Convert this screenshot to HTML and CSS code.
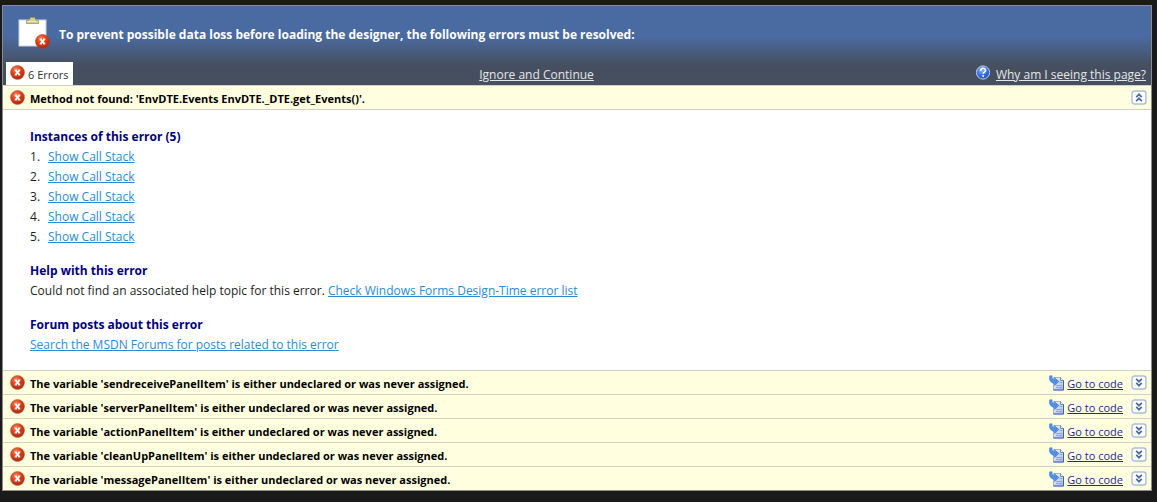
FILE: index.html
```
<!DOCTYPE html>
<html lang="en">
<head>
	<meta charset="utf-8">
	<title>Designer Errors</title>
	<link rel="stylesheet" href="styles.css">
</head>
<body>
	<!-- Shared icons -->
	<svg class="defs" width="0" height="0">
		<defs>
			<radialGradient id="red" cx="40%" cy="30%" r="70%">
				<stop offset="0" stop-color="#f58a62"/>
				<stop offset="0.5" stop-color="#dc4019"/>
				<stop offset="1" stop-color="#a82a10"/>
			</radialGradient>
			<radialGradient id="blue" cx="40%" cy="30%" r="70%">
				<stop offset="0" stop-color="#8ab6f8"/>
				<stop offset="0.6" stop-color="#3470dc"/>
				<stop offset="1" stop-color="#2355b4"/>
			</radialGradient>
			<linearGradient id="paper" x1="0" y1="0" x2="1" y2="1">
				<stop offset="0" stop-color="#ffffff"/>
				<stop offset="1" stop-color="#9db5e0"/>
			</linearGradient>
		</defs>
		<symbol id="error" viewBox="0 0 16 16">
			<circle cx="7.5" cy="7.5" r="7" fill="url(#red)" stroke="#b9644c" stroke-width="0.6"/>
			<path d="M5.5 5.2l4 4.6M9.5 5.2l-4 4.6" stroke="#fff" stroke-width="1.9"/>
			<path d="M4.5 5h2.2M8.3 5h2.2M4.5 10h2.2M8.3 10h2.2" stroke="#fff" stroke-width="0.8"/>
		</symbol>
		<symbol id="help" viewBox="0 0 16 16">
			<circle cx="7" cy="7.5" r="6.6" fill="url(#blue)" stroke="#b9cff5" stroke-width="1"/>
			<path d="M4.6 5.9c0-3.5 5-3.3 5-.4 0 1.7-2.4 1.5-2.4 3.3" fill="none" stroke="#fff" stroke-width="1.6"/>
			<circle cx="7.2" cy="11.1" r="1" fill="#fff"/>
		</symbol>
		<symbol id="code" viewBox="0 0 16 16">
			<path d="M4.5 2.5h7l3 3v9.5h-10z" fill="url(#paper)" stroke="#93a7cb" stroke-width="0.8"/>
			<path d="M4.5 15h10V5.5" fill="none" stroke="#46618f"/>
			<path d="M11.5 2.5v3h3" fill="#e9f0fc" stroke="#5b75a5" stroke-width="0.8"/>
			<path d="M10.5 7.5h2.5M7 10.5h6M7 12.5h6" stroke="#7f99c8" stroke-width="0.8"/>
			<path d="M.8.8C-.6 5 2 8.3 5.5 8.3v2.4l4.5-4.2-4.5-4v2.3C3.6 4.8 2.7 3.4 3.2.8z" fill="#4f90ea" stroke="#3a75cc" stroke-width="0.5"/>
		</symbol>
		<symbol id="expand" viewBox="0 0 16 16">
			<rect x="1" y="1" width="14" height="13" rx="2.5" fill="#fff" stroke="#abc0d5" stroke-width="1.4"/>
			<path d="M5.2 3.9L8 6.7l2.8-2.8M5.2 7.9L8 10.7l2.8-2.8" fill="none" stroke="#4c67a2" stroke-width="1.7"/>
		</symbol>
		<symbol id="collapse" viewBox="0 0 16 16">
			<rect x="1" y="1" width="14" height="13" rx="2.5" fill="#fff" stroke="#abc0d5" stroke-width="1.4"/>
			<path d="M5.2 7.1L8 4.3l2.8 2.8M5.2 11.1L8 8.3l2.8 2.8" fill="none" stroke="#4c67a2" stroke-width="1.7"/>
		</symbol>
	</svg>

	<main class="page">
		<header class="header">
			<div class="title">
				<svg class="clipboard" viewBox="0 0 32 34">
					<rect x="1" y="4" width="27" height="26" fill="#fff" stroke="#c8d2e3"/>
					<path d="M8.5 7.5v-3h2.5l1.5-3h4l1.5 3h2.5v3z" fill="#d5cd8d" stroke="#9d9659" stroke-width="0.8"/>
					<path d="M9.5 5.3h10" stroke="#f3edbd"/>
					<circle cx="24.5" cy="25.5" r="7" fill="url(#red)" stroke="#b04327" stroke-width="0.6"/>
					<path d="M22.5 23.2l4 4.6M26.5 23.2l-4 4.6" stroke="#fff" stroke-width="1.9"/>
					<path d="M21.5 23h2.2M25.3 23h2.2M21.5 28h2.2M25.3 28h2.2" stroke="#fff" stroke-width="0.8"/>
				</svg>
				<h1>To prevent possible data loss before loading the designer, the following errors must be resolved:</h1>
			</div>
			<nav class="tabs">
				<div class="tab-cell">
					<div class="tab"><svg class="icon"><use href="#error"/></svg><span>6 Errors</span></div>
				</div>
				<a href="#">Ignore and Continue</a>
				<div class="why"><svg class="icon"><use href="#help"/></svg><a href="#">Why am I seeing this page?</a></div>
			</nav>
		</header>

		<section class="error">
			<div class="bar">
				<svg class="icon"><use href="#error"/></svg>
				<h2>Method not found: 'EnvDTE.Events EnvDTE._DTE.get_Events()'.</h2>
				<button class="toggle" aria-label="Collapse"><svg class="icon"><use href="#collapse"/></svg></button>
			</div>
			<div class="details">
				<h3>Instances of this error (5)</h3>
				<ol>
					<li><a href="#">Show Call Stack</a></li>
					<li><a href="#">Show Call Stack</a></li>
					<li><a href="#">Show Call Stack</a></li>
					<li><a href="#">Show Call Stack</a></li>
					<li><a href="#">Show Call Stack</a></li>
				</ol>
				<h3>Help with this error</h3>
				<p>Could not find an associated help topic for this error. <a href="#">Check Windows Forms Design-Time error list</a></p>
				<h3>Forum posts about this error</h3>
				<p><a href="#">Search the MSDN Forums for posts related to this error</a></p>
			</div>
		</section>

		<section class="bar">
			<svg class="icon"><use href="#error"/></svg>
			<h2>The variable 'sendreceivePanelItem' is either undeclared or was never assigned.</h2>
			<a class="code" href="#"><svg class="icon"><use href="#code"/></svg><span>Go to code</span></a>
			<button class="toggle" aria-label="Expand"><svg class="icon"><use href="#expand"/></svg></button>
		</section>
		<section class="bar">
			<svg class="icon"><use href="#error"/></svg>
			<h2>The variable 'serverPanelItem' is either undeclared or was never assigned.</h2>
			<a class="code" href="#"><svg class="icon"><use href="#code"/></svg><span>Go to code</span></a>
			<button class="toggle" aria-label="Expand"><svg class="icon"><use href="#expand"/></svg></button>
		</section>
		<section class="bar">
			<svg class="icon"><use href="#error"/></svg>
			<h2>The variable 'actionPanelItem' is either undeclared or was never assigned.</h2>
			<a class="code" href="#"><svg class="icon"><use href="#code"/></svg><span>Go to code</span></a>
			<button class="toggle" aria-label="Expand"><svg class="icon"><use href="#expand"/></svg></button>
		</section>
		<section class="bar">
			<svg class="icon"><use href="#error"/></svg>
			<h2>The variable 'cleanUpPanelItem' is either undeclared or was never assigned.</h2>
			<a class="code" href="#"><svg class="icon"><use href="#code"/></svg><span>Go to code</span></a>
			<button class="toggle" aria-label="Expand"><svg class="icon"><use href="#expand"/></svg></button>
		</section>
		<section class="bar">
			<svg class="icon"><use href="#error"/></svg>
			<h2>The variable 'messagePanelItem' is either undeclared or was never assigned.</h2>
			<a class="code" href="#"><svg class="icon"><use href="#code"/></svg><span>Go to code</span></a>
			<button class="toggle" aria-label="Expand"><svg class="icon"><use href="#expand"/></svg></button>
		</section>
	</main>
</body>
</html>
```
FILE: styles.css
```
body {
	font-family: "Open Sans", "Noto Sans", sans-serif;
	font-size: 12px;
	line-height: 20px;
	margin: 0;
	padding: 5px 5px 11px 2px;
	background-color: #1a1a1a;
	color: #1e1e1e;
}
h1, h2, h3, p, ol {
	margin: 0;
	padding: 0;
}
.defs {
	display: block;
}
.icon {
	display: block;
	flex: none;
	width: 16px;
	height: 16px;
}
.page {
	border: 1px solid #8c8c8c;
	background-color: #fff;
}
.header {
	background: linear-gradient(#4a6ba1 0, #4a6ba1 38%, #454f5f 76%, #454f5f 100%);
	color: #fff;
}
.title {
	display: flex;
	align-items: center;
	gap: 9px;
	padding: 10px 15px 8px;
}
.clipboard {
	flex: none;
	width: 32px;
	height: 34px;
	margin-bottom: 4px;
}
.title h1 {
	font-size: 12px;
}
.tabs {
	display: grid;
	grid-template-columns: 6fr auto 7fr;
	align-items: end;
	padding: 0 5px 0 3px;
}
.tabs a {
	color: #e6e6e6;
}
.tab {
	display: inline-flex;
	gap: 2px;
	padding: 3px 4px 0;
	background-color: #fff;
	color: #333;
	font-size: 11px;
	vertical-align: bottom;
}
.why {
	display: flex;
	justify-content: flex-end;
	gap: 4px;
}
.bar {
	display: flex;
	gap: 4px;
	padding: 0 4px 0 7px;
	border-top: 1px solid #d0d0c8;
	background-color: #ffffdf;
	font-size: 11px;
}
.bar > .icon, .code .icon, .toggle {
	margin-top: 4px;
}
.bar h2 {
	flex: 1;
	padding-top: 3px;
	color: #000;
	font-size: 11px;
	line-height: 20px;
}
.code {
	display: flex;
	gap: 2px;
	color: #29298c;
}
.code span {
	padding-top: 3px;
}
.toggle {
	width: 16px;
	height: 16px;
	margin-left: 4px;
	padding: 0;
	border: none;
	background: none;
	cursor: pointer;
}
.details {
	padding: 17px 27px 15px;
	border-top: 1px solid #d0d0c8;
}
.details h3 {
	color: #00007f;
	font-size: 12px;
	line-height: 20px;
}
.details ol, .details p {
	margin-bottom: 14px;
}
.details p:last-child {
	margin-bottom: 0;
}
.details ol {
	list-style: none;
	counter-reset: instance;
}
.details li {
	display: flex;
	counter-increment: instance;
}
.details li::before {
	content: counter(instance) ".";
	width: 18px;
}
.details a {
	color: #2a8dd4;
}
```
